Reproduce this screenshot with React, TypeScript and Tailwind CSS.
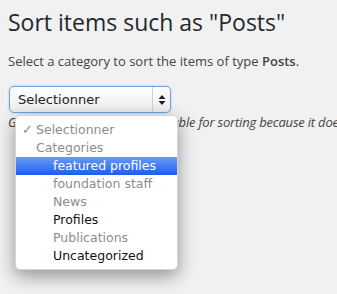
import React from "react";

const items: { label: string; check?: boolean; indent?: boolean; tone: "gray" | "black" | "sel" }[] = [
  { label: "Selectionner", check: true, tone: "gray" },
  { label: "Categories", tone: "gray" },
  { label: "featured profiles", indent: true, tone: "sel" },
  { label: "foundation staff", indent: true, tone: "gray" },
  { label: "News", indent: true, tone: "gray" },
  { label: "Profiles", indent: true, tone: "black" },
  { label: "Publications", indent: true, tone: "gray" },
  { label: "Uncategorized", indent: true, tone: "black" },
];

export default function App() {
  return (
    <div className="relative w-[337px] h-[294px] overflow-hidden bg-[#f1f1f1] pl-2" style={{ fontFamily: '"Open Sans", sans-serif' }}>
      <h1 className="mt-2 text-[23px] leading-[29px] font-normal text-[#23282d] whitespace-nowrap">
        Sort items such as "Posts"
      </h1>
      <p className="mt-[15px] text-[13px] leading-[19.5px] text-[#444] whitespace-nowrap">
        Select a category to sort the items of type <b className="font-semibold">Posts</b>.
      </p>
      <div className="mt-[14.5px] ml-px flex h-[27px] w-[162px] items-center rounded-[5px] border border-[#6aa6e8] bg-gradient-to-b from-white to-[#ececec] shadow-[0_0_2px_rgba(80,150,230,0.6)]">
        <span className="flex-1 pl-2 text-[13px] text-[#222]" style={{ fontFamily: '"DejaVu Sans", sans-serif' }}>
          Selectionner
        </span>
        <div className="flex h-full w-[18px] items-center justify-center border-l border-[#cfcfcf]">
          <svg width="8" height="12" viewBox="0 0 8 12">
            <path d="M4 1 L7.5 5 L0.5 5 Z" fill="#222" />
            <path d="M4 11 L7.5 7 L0.5 7 Z" fill="#222" />
          </svg>
        </div>
      </div>
      <p className="text-[13px] italic leading-[19.5px] text-[#444] whitespace-nowrap tracking-[-0.2px]">
        Greyed-out category not available for sorting because it does not contain enough items.
      </p>

      <div
        className="absolute left-[15px] top-[115px] w-[163px] rounded-[5px] border border-[#d6d6d6] bg-white pt-[5px] pb-[4px] shadow-[0_6px_18px_rgba(0,0,0,0.4)]"
        style={{ fontFamily: '"DejaVu Sans", sans-serif' }}
      >
        {items.map((it) => (
          <div
            key={it.label}
            className={
              "relative flex h-[18px] items-center text-[12.5px] whitespace-nowrap " +
              (it.tone === "sel"
                ? "bg-gradient-to-b from-[#6a9af6] to-[#1c5cf0] text-white"
                : it.tone === "black"
                ? "text-[#111]"
                : "text-[#8c8c8c]") +
              (it.indent ? " pl-[37px]" : " pl-[20px]")
            }
          >
            {it.check && <span className="absolute left-[6px] text-[13px]">✓</span>}
            {it.label}
          </div>
        ))}
      </div>
    </div>
  );
}
